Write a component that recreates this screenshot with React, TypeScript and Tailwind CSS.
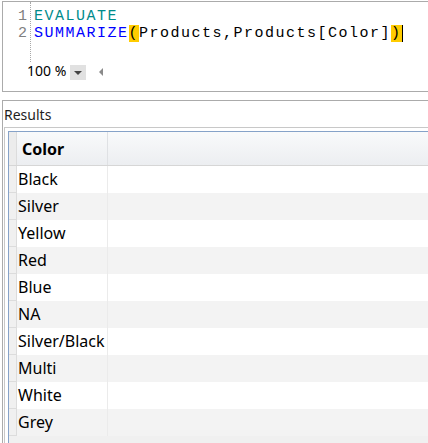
const colors = [
  "Black",
  "Silver",
  "Yellow",
  "Red",
  "Blue",
  "NA",
  "Silver/Black",
  "Multi",
  "White",
  "Grey",
];

export default function App() {
  return (
    <div className="w-[428px] h-[443px] overflow-hidden bg-white font-['Noto_Sans',sans-serif] text-black">
      {/* query editor */}
      <div className="mt-px ml-[2px] h-[91px] border-t border-l border-b border-[#ababab] flex flex-col">
        <div className="flex h-[60px] font-['Liberation_Mono',monospace] text-[15px] leading-[17px] tracking-[1.5px]">
          <div className="w-[24px] pt-[6px] text-right text-[#808080] tracking-normal">
            <div>1</div>
            <div>2</div>
          </div>
          <div className="ml-[3px] w-0 border-l border-dotted border-[#a8a8a8]" />
          <div className="ml-[3px] pt-[6px] whitespace-pre">
            <div className="text-[#008b8b]">EVALUATE</div>
            <div className="flex">
              <span className="text-[#0000ff]">SUMMARIZE</span>
              <span className="inline-block h-[17px] bg-[#ffcc00]">(</span>
              <span>Products,Products[Color]</span>
              <span className="inline-block h-[17px] bg-[#ffcc00]">)</span>
              <span className="inline-block w-px h-[17px] bg-black" />
            </div>
          </div>
        </div>
        <div className="flex items-start pl-[24px] h-[28px] text-[14px] leading-[17px]">
          <span>100 %</span>
          <div className="mt-[3px] ml-[4px] w-[16px] h-[15px] bg-[#e1e1e1] flex items-center justify-center">
            <div className="w-0 h-0 border-l-[4px] border-r-[4px] border-t-[4px] border-l-transparent border-r-transparent border-t-[#444]" />
          </div>
          <div className="mt-[6px] ml-[13px] w-0 h-0 border-t-[4px] border-b-[4px] border-r-[4px] border-t-transparent border-b-transparent border-r-[#8a8a8a]" />
        </div>
      </div>

      {/* results */}
      <div className="mt-[8px] ml-[2px] border-t border-l border-[#ababab]">
        <div className="h-[26px] pt-[5px] pl-[1px] text-[14px] leading-[17px] text-[#1e1e1e]">Results</div>
        <div className="ml-[1px] pt-[3px] pl-[3px] border-t border-l border-[#c8c8c8]">
          <div className="h-[400px] border-t border-l border-[#86a2c8] bg-[#f0f0f0]">
            <div className="flex h-[34px] border-b border-[#d6d6d6] bg-gradient-to-b from-[#f9fafb] to-[#eceef1]">
              <div className="w-[8px] border-r border-[#dcdcdc] bg-[#ececec]" />
              <div className="w-[91px] border-r border-[#dfe1e4] pl-[5px] pt-px text-[16px] leading-[33px] font-bold">
                Color
              </div>
              <div className="flex-1" />
            </div>
            {colors.map((c, i) => (
              <div
                key={c}
                className={"flex h-[27px] " + (i % 2 === 0 ? "bg-white" : "bg-[#f3f3f3]")}
              >
                <div className="w-[8px] border-r border-b border-[#dcdcdc] bg-[#f0f0f0]" />
                <div className="w-[91px] border-r border-[#ebebeb] pl-px text-[16px] leading-[27px]">{c}</div>
                <div className="flex-1" />
              </div>
            ))}
          </div>
        </div>
      </div>
    </div>
  );
}
